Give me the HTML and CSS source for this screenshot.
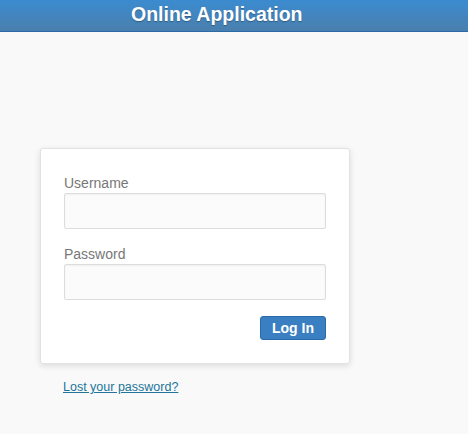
FILE: index.html
```html
<!DOCTYPE html>
<html>
<head>
<meta charset="utf-8">
<link rel="stylesheet" href="styles.css">
</head>
<body>
<header class="topbar">
  <h1 class="title">Online Application</h1>
</header>
<main class="login">
  <form class="card">
    <label class="label" for="user">Username</label>
    <input class="field" id="user" type="text">
    <label class="label label-pass" for="pass">Password</label>
    <input class="field" id="pass" type="password">
    <div class="actions">
      <button class="btn" type="button">Log In</button>
    </div>
  </form>
  <p class="lost"><a href="#">Lost your password?</a></p>
</main>
</body>
</html>
```

FILE: styles.css
```css
html, body {
  margin: 0;
  padding: 0;
  background: #f9f9f9;
  font-family: "Liberation Sans", Arial, sans-serif;
}
.topbar {
  height: 32px;
  background: linear-gradient(#3b8bd0, #4a7fad);
  border-bottom: 1px solid #2a6aa8;
  box-sizing: border-box;
  padding-left: 131px;
}
.title {
  margin: 0;
  color: #fff;
  font-size: 19.5px;
  font-weight: bold;
  line-height: 28px;
  text-shadow: 0 1px 1px rgba(0,0,0,0.3);
}
.login {
  padding: 116px 0 0 40px;
}
.card {
  width: 310px;
  box-sizing: border-box;
  background: #fff;
  border: 1px solid #e2e2e2;
  border-radius: 3px;
  box-shadow: 0 2px 6px rgba(0,0,0,0.12);
  padding: 26px 23px 23px 23px;
  display: flex;
  flex-direction: column;
}
.label {
  color: #777;
  font-size: 14px;
  line-height: 16px;
  margin-bottom: 2px;
}
.label-pass {
  margin-top: 17px;
}
.field {
  height: 36px;
  box-sizing: border-box;
  border: 1px solid #ddd;
  border-radius: 2px;
  background: #fbfbfb;
  box-shadow: inset 0 1px 2px rgba(0,0,0,0.05);
  margin: 0;
}
.actions {
  display: flex;
  justify-content: flex-end;
  margin-top: 16px;
}
.btn {
  width: 66px;
  height: 24px;
  box-sizing: border-box;
  background: #3a7fc1;
  border: 1px solid #2b6aa8;
  border-radius: 3px;
  color: #fff;
  font-family: "Liberation Sans", Arial, sans-serif;
  font-size: 14px;
  font-weight: bold;
  padding: 0;
}
.lost {
  margin: 16px 0 0 23px;
  font-size: 12.5px;
}
.lost a {
  color: #21759b;
}
```
